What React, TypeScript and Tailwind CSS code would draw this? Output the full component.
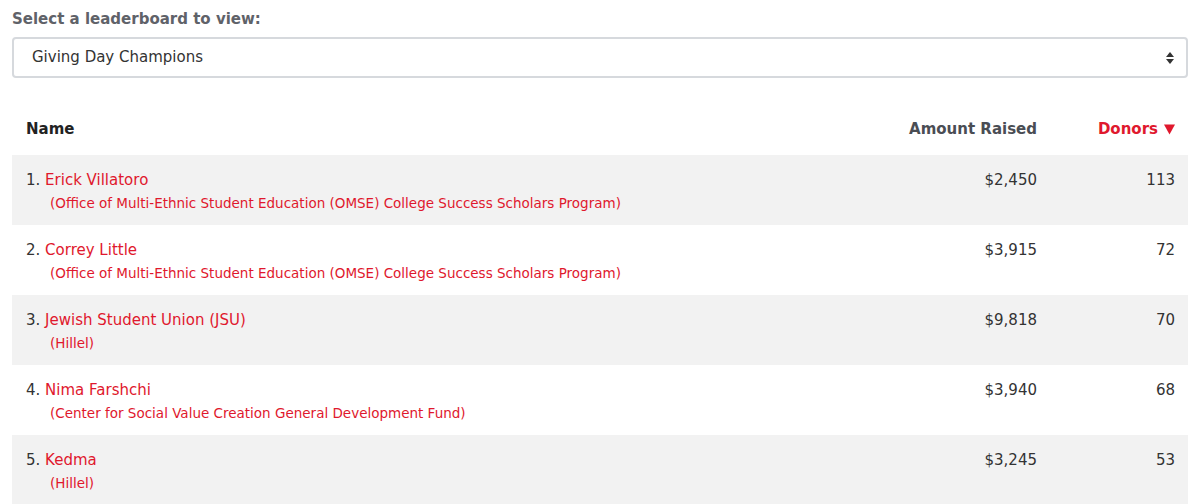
import React from 'react';

const rows = [
    { name: 'Erick Villatoro', sub: 'Office of Multi-Ethnic Student Education (OMSE) College Success Scholars Program', amount: '$2,450', donors: 113 },
    { name: 'Correy Little', sub: 'Office of Multi-Ethnic Student Education (OMSE) College Success Scholars Program', amount: '$3,915', donors: 72 },
    { name: 'Jewish Student Union (JSU)', sub: 'Hillel', amount: '$9,818', donors: 70 },
    { name: 'Nima Farshchi', sub: 'Center for Social Value Creation General Development Fund', amount: '$3,940', donors: 68 },
    { name: 'Kedma', sub: 'Hillel', amount: '$3,245', donors: 53 },
];

const App = () => {
    return (
        <div className="h-[504px] overflow-hidden bg-white px-[12px] font-['DejaVu_Sans',Verdana,sans-serif]">
            <div className="pt-[10px] text-[15px] font-bold leading-[18px] text-[#5f6269]">Select a leaderboard to view:</div>
            <div className="mt-[9px] flex h-[41px] items-center justify-between rounded-[4px] border-2 border-[#d6d9dd] pl-[18px] pr-[12px] text-[15px] text-[#333]">
                <span>Giving Day Champions</span>
                <svg width="8" height="12" viewBox="0 0 8 12" className="text-[#333]">
                    <path d="M4 0 L8 5 L0 5 Z" fill="currentColor" />
                    <path d="M0 7 L8 7 L4 12 Z" fill="currentColor" />
                </svg>
            </div>
            <div className="flex h-[77px] items-end px-[13px] pb-[17px] text-[15px] font-bold leading-[18px]">
                <div className="flex-1 pl-[1px] text-[#222]">Name</div>
                <div className="w-[200px] text-right text-[#4a4d54]">Amount Raised</div>
                <div className="flex w-[138px] items-center justify-end gap-[6px] text-[#e0182d]">
                    Donors
                    <svg width="11" height="11" viewBox="0 0 12 11">
                        <path d="M0 0 L12 0 L6 11 Z" fill="currentColor" />
                    </svg>
                </div>
            </div>
            {rows.map((r, i) => (
                <div key={i} className={`flex h-[70px] px-[13px] pt-[16px] text-[15px] ${i % 2 === 0 ? 'bg-[#f2f2f2]' : 'bg-white'}`}>
                    <div className="flex-1 pl-[1px]">
                        <div className="leading-[18px] text-[#333]">
                            {i + 1}. <span className="text-[#e0182d]">{r.name}</span>
                        </div>
                        <div className="mt-[6px] pl-[24px] text-[13.5px] leading-[16px] text-[#e0182d]">({r.sub})</div>
                    </div>
                    <div className="w-[200px] text-right leading-[18px] text-[#333]">{r.amount}</div>
                    <div className="w-[138px] text-right leading-[18px] text-[#333]">{r.donors}</div>
                </div>
            ))}
        </div>
    );
};

export default App;
